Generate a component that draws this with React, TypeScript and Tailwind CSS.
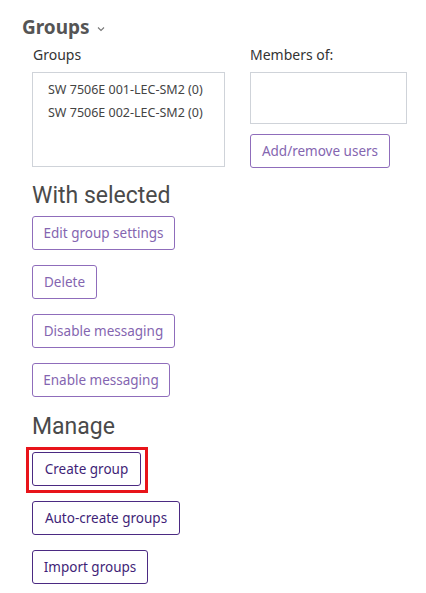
const groups = ['SW 7506E 001-LEC-SM2 (0)', 'SW 7506E 002-LEC-SM2 (0)'];

const selectedActions = [
  { label: 'Edit group settings', width: 'w-[143px]' },
  { label: 'Delete', width: 'w-[65px]' },
  { label: 'Disable messaging', width: 'w-[143px]' },
  { label: 'Enable messaging', width: 'w-[138px]' },
];

const OutlineButton = ({ label, width, dark }: { label: string; width: string; dark?: boolean }) => (
  <button
    className={`${width} h-[34px] rounded-[3px] border bg-white text-[13.5px] ${
      dark ? 'border-[#4b2a82] text-[#3f1f78]' : 'border-[#8f6dbb] text-[#8465b0]'
    }`}
  >
    {label}
  </button>
);

export default function App() {
  return (
    <div className="h-[593px] w-[426px] overflow-hidden bg-white font-['Noto_Sans',sans-serif] text-[#333]">
      <div className="flex items-center gap-[7px] pl-[22px] pt-[14px]">
        <h2 className="text-[19px] font-bold leading-[26px] text-[#555]">Groups</h2>
        <svg width="8" height="6" viewBox="0 0 8 6" className="mt-[3px]">
          <path d="M1 1.5 L4 4.5 L7 1.5" fill="none" stroke="#777" strokeWidth="1.1" />
        </svg>
      </div>

      <div className="flex gap-[25px] pl-[32px] pt-[2px]">
        <div className="flex flex-col">
          <span className="pl-px text-[14px] leading-[26px]">Groups</span>
          <div className="mt-[4px] h-[95px] w-[193px] border border-[#cfd3d9] pl-[15px] pt-[5px] text-[12.5px] leading-[23px] text-[#444]">
            {groups.map((g) => (
              <div key={g}>{g}</div>
            ))}
          </div>
        </div>
        <div className="flex flex-col">
          <span className="text-[14px] leading-[26px]">Members of:</span>
          <div className="mt-[4px] h-[52px] w-[157px] border border-[#cfd3d9]" />
          <div className="mt-[10px]">
            <OutlineButton label="Add/remove users" width="w-[140px]" />
          </div>
        </div>
      </div>

      <div className="pl-[32px]">
        <h3 className="mt-[13px] font-['Roboto',sans-serif] text-[23px] leading-[30px] text-[#4a4a4a]">With selected</h3>
        <div className="mt-[5px] flex flex-col items-start gap-[15px]">
          {selectedActions.map((a) => (
            <OutlineButton key={a.label} label={a.label} width={a.width} />
          ))}
        </div>

        <h3 className="mt-[15px] font-['Roboto',sans-serif] text-[23px] leading-[30px] text-[#4a4a4a]">Manage</h3>
        <div className="flex flex-col items-start">
          <div className="-ml-[6px] mt-[5px] border-[3px] border-[#e8141a] pb-[4px] pl-[3px] pr-[4px] pt-[2px]">
            <OutlineButton label="Create group" width="w-[109px]" dark />
          </div>
          <div className="mt-[8px]">
            <OutlineButton label="Auto-create groups" width="w-[148px]" dark />
          </div>
          <div className="mt-[15px]">
            <OutlineButton label="Import groups" width="w-[116px]" dark />
          </div>
        </div>
      </div>
    </div>
  );
}
